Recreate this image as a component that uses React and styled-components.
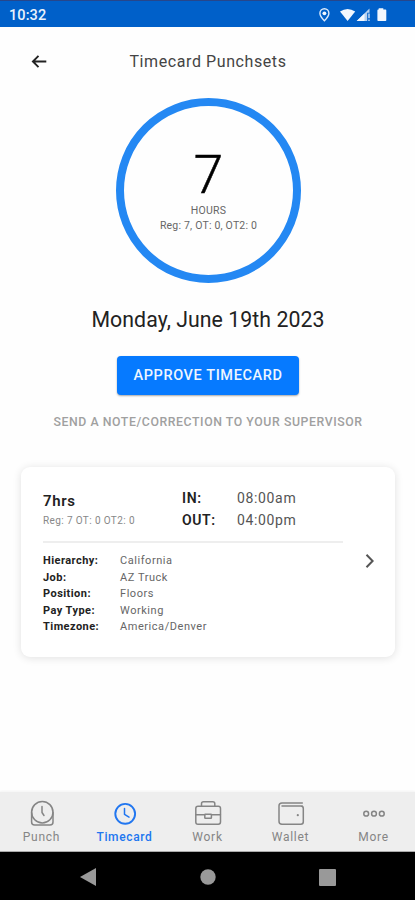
import React from "react";
import styled, {createGlobalStyle} from "styled-components";

const GlobalStyle = createGlobalStyle`
* {
box-sizing: border-box;
}
body {
margin: 0;
background: #fff;
font-family: Roboto, "Liberation Sans", sans-serif;
color: #111;
}
`;

const Screen = styled.div`
display: flex;
flex-direction: column;
width: 415px;
height: 900px;
overflow: hidden;
background: #fefefe;
`;

const StatusBar = styled.div`
display: flex;
align-items: center;
justify-content: space-between;
flex: none;
height: 27px;
padding: 2px 27px 0 9px;
border-top: 1px solid #26468b;
background: #0060c9;
color: #eaf2fc;
font-size: 14.5px;
font-weight: 500;
letter-spacing: 0.1px;
`;

const Header = styled.header`
display: grid;
grid-template-columns: 48px 1fr 48px;
align-items: center;
flex: none;
height: 71px;
padding: 0 15px 2px;
`;

const BackButton = styled.button`
display: flex;
justify-content: center;
padding: 0;
border: 0;
background: none;
color: #222;
`;

const Title = styled.h1`
margin: 0;
padding-left: 1px;
font-size: 16px;
font-weight: 400;
line-height: 20px;
letter-spacing: 0.59px;
text-align: center;
color: #444;
`;

const Summary = styled.section`
display: flex;
flex-direction: column;
align-items: center;
flex: none;
height: 369px;
`;

const Ring = styled.div`
display: flex;
flex-direction: column;
align-items: center;
width: 185px;
height: 185px;
margin-left: 2px;
padding-top: 47px;
border: 8px solid #2488f3;
border-radius: 50%;
`;

const Total = styled.div`
height: 50px;
font-size: 53px;
font-weight: 300;
line-height: 45px;
-webkit-text-stroke: 0.5px #000;
color: #000;
`;

const RingText = styled.div`
font-size: ${props => props.$size}px;
line-height: 15px;
letter-spacing: ${props => props.$spacing}px;
color: #666;
white-space: nowrap;
`;

const DateText = styled.h2`
margin: 23px 0 0 1px;
font-size: 21.3px;
font-weight: 400;
line-height: 28px;
letter-spacing: 0.05px;
color: #222;
`;

const ApproveButton = styled.button`
width: 182px;
height: 39px;
margin: 22px 0 0 1px;
padding: 0;
border: 0;
border-radius: 4px;
background: #067aff;
box-shadow: 0 1px 2px rgba(0, 0, 0, 0.35);
color: #eef6ff;
font-family: inherit;
font-size: 14.5px;
font-weight: 500;
letter-spacing: 0.6px;
line-height: 38px;
`;

const NoteLink = styled.div`
margin-top: 17px;
padding-left: 1px;
font-size: 12.3px;
font-weight: 500;
line-height: 20px;
letter-spacing: 0.57px;
color: #a0a0a0;
white-space: nowrap;
`;

const Card = styled.section`
display: flex;
align-items: center;
justify-content: space-between;
flex: none;
width: 374px;
height: 190px;
margin-left: 21px;
padding: 0 19px 0 22px;
border-radius: 9px;
background: #fff;
box-shadow: 0 1px 9px rgba(0, 0, 0, 0.12);
`;

const CardBody = styled.div`
width: 300px;
height: 190px;
`;

const Chevron = styled.svg`
margin-bottom: 2px;
`;

const Punches = styled.div`
display: grid;
grid-template-columns: 139px 1fr;
height: 76px;
padding-top: 21px;
border-bottom: 2px solid #eee;
`;

const Hours = styled.div`
padding-top: 4px;
font-size: 15px;
font-weight: 600;
line-height: 19px;
letter-spacing: 0.6px;
color: #222;
`;

const Breakdown = styled.div`
font-size: 10px;
line-height: 19px;
letter-spacing: 0.38px;
color: #888;
white-space: nowrap;
`;

const Times = styled.dl`
display: grid;
grid-template-columns: 55px 1fr;
grid-auto-rows: 21.5px;
margin: 0;
font-size: 14px;
line-height: 21px;
`;

const TimeLabel = styled.dt`
font-weight: 600;
letter-spacing: 0.6px;
color: #222;
`;

const TimeValue = styled.dd`
margin: 0;
letter-spacing: 0.65px;
color: #555;
`;

const Details = styled.dl`
display: grid;
grid-template-columns: 77px 1fr;
grid-auto-rows: 16.5px;
margin: 10px 0 0;
font-size: 11px;
line-height: 16px;
`;

const DetailLabel = styled.dt`
font-weight: 700;
letter-spacing: 0.45px;
color: #222;
`;

const DetailValue = styled.dd`
margin: 0;
letter-spacing: 0.55px;
color: #666;
`;

const TabBar = styled.nav`
display: grid;
grid-template-columns: repeat(5, 1fr);
flex: none;
height: 60px;
margin-top: auto;
padding-top: 8px;
border-bottom: 1px solid #aaa;
background: #eee;
box-shadow: 0 -1px 2px #f3f3f3;
`;

const Tab = styled.div`
display: flex;
flex-direction: column;
align-items: center;
color: ${props => props.$active ? '#2176f0' : '#858585'};
`;

const TabLabel = styled.span`
margin-top: 1px;
font-size: 12px;
font-weight: ${props => props.$active ? 500 : 400};
line-height: 17px;
letter-spacing: ${props => props.$active ? 0.65 : 0.75}px;
`;

const SystemNav = styled.div`
display: flex;
flex: none;
align-items: center;
justify-content: center;
gap: 103px;
height: 48px;
padding: 2px 0 0 0;
background: #000;
`;

const Icon = ({size = 28, width = 1.5, children}) => (
    <svg width={size} height={size} viewBox={`0 0 ${size} ${size}`} fill="none" stroke="currentColor"
         strokeWidth={width} strokeLinecap="round" strokeLinejoin="round">{children}</svg>
);

const icons = {
    Punch: (
        <Icon>
            <circle cx="14.3" cy="12.2" r="10.7"/>
            <path d="M3.6 12.5V22q0 3 3 3h15.4q3 0 3-3V12.5M14 6.5v6l2 3"/>
        </Icon>
    ),
    Timecard: (
        <Icon width={1.9}>
            <circle cx="14.2" cy="13.8" r="9.9"/>
            <path d="M13.5 8.4v6l4.5 2.8" strokeWidth="1.5"/>
        </Icon>
    ),
    Work: (
        <Icon>
            <rect x="1.8" y="6.3" width="24.7" height="18" rx="2.2"/>
            <path d="M7.5 6V3.8q0-2 2-2h9.3q2 0 2 2V6M2 14.8h8.8m6.8 0h8.8"/>
            <rect x="10.8" y="14.3" width="6.6" height="4" rx=".5"/>
        </Icon>
    ),
    Wallet: (
        <Icon>
            <path d="M25.3 6.1H5M25.3 2.9H5Q2 2.9 2 5.8v15.5q0 3 3 3h18.8q2.5 0 2.5-2.5V8.6q0-2.5-2.5-2.5"/>
            <circle cx="20.8" cy="15.2" r="1.1" fill="currentColor" stroke="none"/>
        </Icon>
    ),
    More: (
        <Icon width={1.5}>
            <circle cx="6.2" cy="13.7" r="2.4"/>
            <circle cx="14" cy="13.7" r="2.4"/>
            <circle cx="21.8" cy="13.7" r="2.4"/>
        </Icon>
    )
};

const details = [
    {label: 'Hierarchy:', value: 'California'},
    {label: 'Job:', value: 'AZ Truck'},
    {label: 'Position:', value: 'Floors'},
    {label: 'Pay Type:', value: 'Working'},
    {label: 'Timezone:', value: 'America/Denver'}
];

const StatusIcons = () => (
    <svg width="70" height="16" viewBox="0 0 70 16" fill="#f2f7fe">
        <path d="M6.4 1.7a4.5 4.5 0 0 0-4.5 4.5c0 3 4.5 7.5 4.5 7.5s4.5-4.5 4.5-7.5a4.5 4.5 0 0 0-4.5-4.5z"
              fill="none" stroke="#dceafb" strokeWidth="1.4"/>
        <circle cx="6.4" cy="6.3" r="1.9"/>
        <path d="M22 4.5q7.5-5 15.2 0L29.6 14z"/>
        <path d="M38.7 14L51.5 1.5v4.2h-2.3V14z" fill="#b8d2f0"/>
        <path d="M38.7 14l7.8-7.5V14z"/>
        <path d="M50.4 6.5h1.2v4.8h-1.2zm0 6.1h1.2V14h-1.2z"/>
        <path d="M60.7 1.2h4.6v1.4h2.2q.8 0 .8.8v9.8q0 .8-.8.8h-7.3q-.8 0-.8-.8V3.4q0-.8.8-.8h.5z"/>
    </svg>
);

export default class App extends React.Component {

    state = {
        tab: 'Timecard'
    };

    render() {
        const {tab} = this.state;
        return (
            <Screen>
                <GlobalStyle/>
                <StatusBar>
                    <span>10:32</span>
                    <StatusIcons/>
                </StatusBar>
                <Header>
                    <BackButton aria-label="Back">
                        <svg width="18" height="16" viewBox="0 0 18 16" fill="none" stroke="currentColor"
                             strokeWidth="1.9">
                            <path d="M16.3 7.5H3.2M8.5 1.9L2.9 7.5l5.6 5.6"/>
                        </svg>
                    </BackButton>
                    <Title>Timecard Punchsets</Title>
                </Header>
                <Summary>
                    <Ring>
                        <Total>7</Total>
                        <RingText $size={10.5} $spacing={0.25}>HOURS</RingText>
                        <RingText $size={10.5} $spacing={0.2}>Reg: 7, OT: 0, OT2: 0</RingText>
                    </Ring>
                    <DateText>Monday, June 19th 2023</DateText>
                    <ApproveButton>APPROVE TIMECARD</ApproveButton>
                    <NoteLink>SEND A NOTE/CORRECTION TO YOUR SUPERVISOR</NoteLink>
                </Summary>
                <Card>
                    <CardBody>
                        <Punches>
                            <div>
                                <Hours>7hrs</Hours>
                                <Breakdown>Reg: 7 OT: 0 OT2: 0</Breakdown>
                            </div>
                            <Times>
                                <TimeLabel>IN:</TimeLabel>
                                <TimeValue>08:00am</TimeValue>
                                <TimeLabel>OUT:</TimeLabel>
                                <TimeValue>04:00pm</TimeValue>
                            </Times>
                        </Punches>
                        <Details>
                            {details.map(detail => (
                                <React.Fragment key={detail.label}>
                                    <DetailLabel>{detail.label}</DetailLabel>
                                    <DetailValue>{detail.value}</DetailValue>
                                </React.Fragment>
                            ))}
                        </Details>
                    </CardBody>
                    <Chevron width="12" height="16" viewBox="0 0 12 16" fill="none" stroke="#555" strokeWidth="2">
                        <path d="M2.5 1.8L8.6 8l-6.1 6.2"/>
                    </Chevron>
                </Card>
                <TabBar>
                    {Object.keys(icons).map(name => (
                        <Tab key={name} $active={name === tab} onClick={() => this.setState({tab: name})}>
                            {icons[name]}
                            <TabLabel $active={name === tab}>{name}</TabLabel>
                        </Tab>
                    ))}
                </TabBar>
                <SystemNav>
                    <svg width="17" height="18" viewBox="0 0 17 18"><path d="M0 9L16 0v18z" fill="#999"/></svg>
                    <svg width="16" height="16" viewBox="0 0 16 16"><circle cx="8" cy="8" r="7.7" fill="#999"/></svg>
                    <svg width="17" height="17" viewBox="0 0 17 17"><rect width="17" height="17" rx="1" fill="#999"/></svg>
                </SystemNav>
            </Screen>
        )
    }
}
